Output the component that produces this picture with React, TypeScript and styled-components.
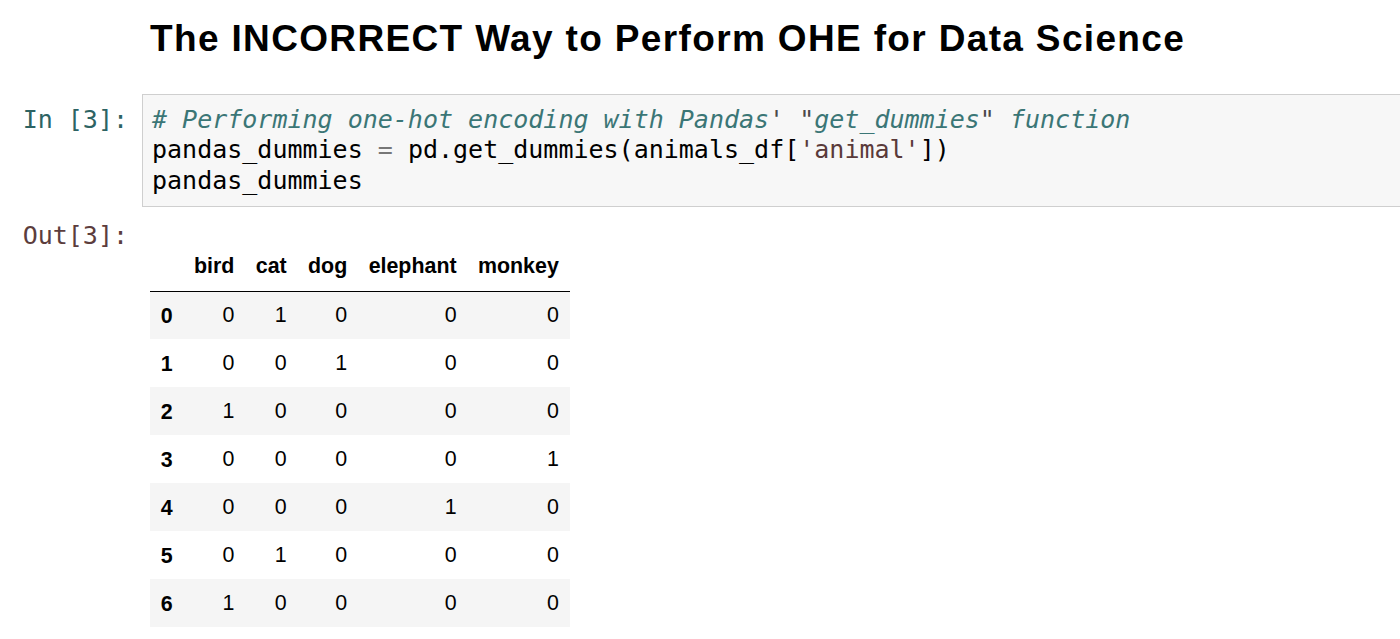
import React from "react";
import styled, { createGlobalStyle } from "styled-components";

const Global = createGlobalStyle`
  html, body { margin: 0; padding: 0; background: #ffffff; }
  body { overflow: hidden; }
`;

const Page = styled.div`
  width: 1400px;
  height: 639px;
  overflow: hidden;
  background: #fff;
  padding-top: 18px;
  box-sizing: border-box;
`;

const Title = styled.h1`
  margin: 0 0 34px 150px;
  font-family: "Liberation Sans", Arial, sans-serif;
  font-weight: 700;
  font-size: 37px;
  letter-spacing: 1.35px;
  line-height: 42px;
  color: #000;
  white-space: nowrap;
`;

const CellRow = styled.div<{ $gap?: number }>`
  display: flex;
  align-items: flex-start;
  margin-top: ${(p) => p.$gap ?? 0}px;
`;

const Prompt = styled.div<{ $kind: "in" | "out"; $top?: number }>`
  flex: 0 0 142px;
  box-sizing: border-box;
  padding-right: 14px;
  padding-top: ${(p) => p.$top ?? 0}px;
  text-align: right;
  font-family: "DejaVu Sans Mono", monospace;
  font-size: 25px;
  line-height: 30.4px;
  white-space: pre;
  color: ${(p) => (p.$kind === "in" ? "#2d6363" : "#5c3d3d")};
`;

const CodeBox = styled.div`
  flex: 1;
  margin-right: -20px;
  background: #f7f7f7;
  border: 1px solid #cfcfcf;
  padding: 10px 9px;
  font-family: "DejaVu Sans Mono", monospace;
  font-size: 25px;
  line-height: 30.4px;
  color: #000;
  white-space: pre;
`;

const Comment = styled.span`
  color: #3b7676;
  font-style: italic;
`;

const Quote = styled.span`
  color: #4a4a4a;
  font-style: normal;
`;

const Op = styled.span`
  color: #777;
`;

const Str = styled.span`
  color: #5a3a3a;
`;

const Output = styled.div`
  padding-top: 22px;
  padding-left: 8px;
`;

const Table = styled.table`
  border-collapse: collapse;
  border-spacing: 0;
  font-family: "Liberation Sans", Arial, sans-serif;
  font-size: 21.4px;
  color: #000;
`;

const HeadCell = styled.th`
  height: 48px;
  box-sizing: border-box;
  padding: 0 10.7px;
  text-align: right;
  font-weight: 700;
  vertical-align: middle;
  border-bottom: 1px solid #000;
  white-space: nowrap;
`;

const BodyRow = styled.tr<{ $striped: boolean }>`
  height: 48px;
  background: ${(p) => (p.$striped ? "#f5f5f5" : "#ffffff")};
`;

const IndexCell = styled.th`
  padding: 2px 10.7px 0;
  text-align: left;
  font-weight: 700;
  vertical-align: middle;
`;

const DataCell = styled.td`
  padding: 0 10.7px;
  text-align: right;
  vertical-align: middle;
`;

const columns = ["bird", "cat", "dog", "elephant", "monkey"];
const rows = [
  [0, 1, 0, 0, 0],
  [0, 0, 1, 0, 0],
  [1, 0, 0, 0, 0],
  [0, 0, 0, 0, 1],
  [0, 0, 0, 1, 0],
  [0, 1, 0, 0, 0],
  [1, 0, 0, 0, 0],
];

export default function App() {
  return (
    <>
      <Global />
      <Page>
        <Title>The INCORRECT Way to Perform OHE for Data Science</Title>
        <CellRow>
          <Prompt $kind="in" $top={11}>In [3]:</Prompt>
          <CodeBox>
            <Comment>
              # Performing one-hot encoding with Pandas<Quote>' "</Quote>get_dummies
              <Quote>"</Quote> function
            </Comment>
            {"\n"}pandas_dummies <Op>=</Op> pd.get_dummies(animals_df[<Str>'animal'</Str>])
            {"\n"}pandas_dummies
          </CodeBox>
        </CellRow>
        <CellRow $gap={14}>
          <Prompt $kind="out">Out[3]:</Prompt>
          <Output>
            <Table>
              <thead>
                <tr>
                  <HeadCell />
                  {columns.map((c) => (
                    <HeadCell key={c}>{c}</HeadCell>
                  ))}
                </tr>
              </thead>
              <tbody>
                {rows.map((r, i) => (
                  <BodyRow key={i} $striped={i % 2 === 0}>
                    <IndexCell>{i}</IndexCell>
                    {r.map((v, j) => (
                      <DataCell key={j}>{v}</DataCell>
                    ))}
                  </BodyRow>
                ))}
              </tbody>
            </Table>
          </Output>
        </CellRow>
      </Page>
    </>
  );
}
